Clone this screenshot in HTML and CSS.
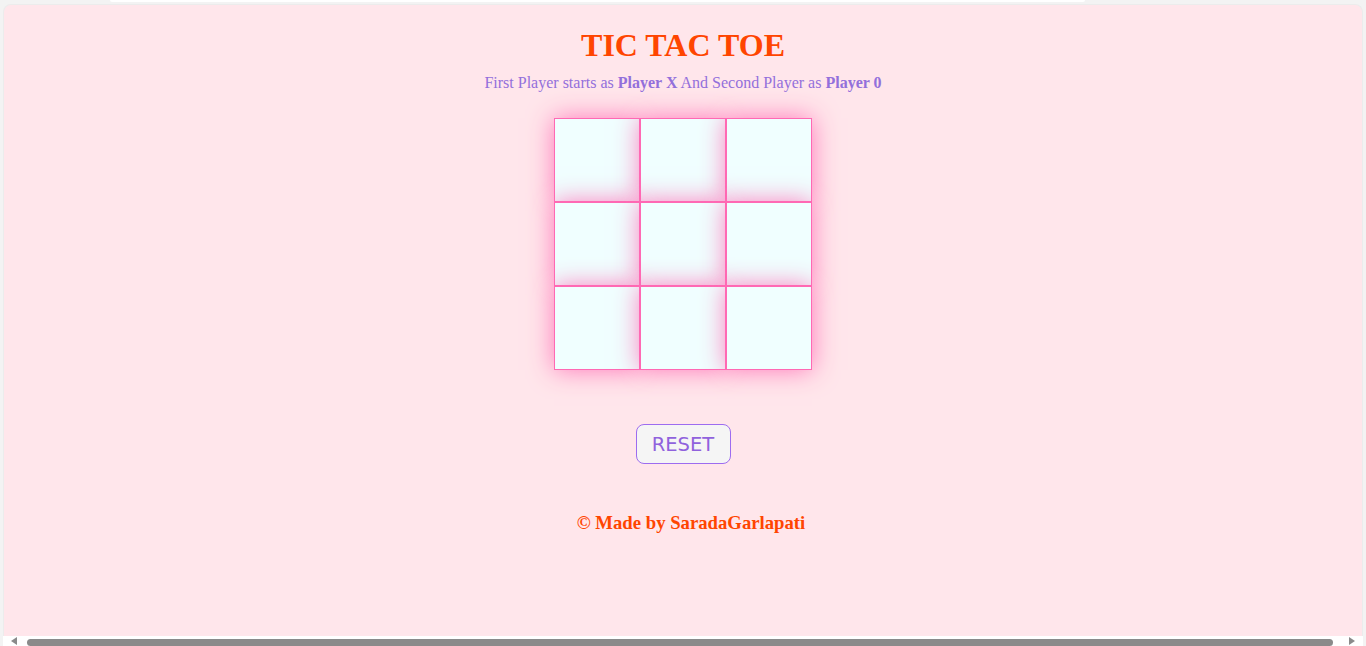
FILE: index.html
```html
<!DOCTYPE html>
<html>
<head>
<meta charset="utf-8">
<title>Tic Tac Toe</title>
<link rel="stylesheet" href="styles.css">
</head>
<body>
<div class="topstrip"></div>
<main class="card">
  <h1 class="title">TIC TAC TOE</h1>
  <p class="subtitle">First Player starts as <b>Player X</b> And Second Player as <b>Player 0</b></p>
  <div class="board">
    <div class="cell"></div><div class="cell"></div><div class="cell"></div>
    <div class="cell"></div><div class="cell"></div><div class="cell"></div>
    <div class="cell"></div><div class="cell"></div><div class="cell"></div>
  </div>
  <button class="reset">RESET</button>
  <p class="footer">© Made by SaradaGarlapati</p>
</main>
<div class="hscroll">
  <span class="arrow left"></span>
  <span class="thumb"></span>
  <span class="arrow right"></span>
</div>
</body>
</html>
```
FILE: styles.css
```css
html, body {
  margin: 0;
  padding: 0;
  height: 646px;
  overflow: hidden;
  background: #f3f3f3;
}
body {
  font-family: "Liberation Serif", "Times New Roman", serif;
}
.topstrip {
  margin-left: 110px;
  width: 975px;
  height: 2px;
  background: #ffffff;
  border-radius: 0 0 3px 3px;
}
.card {
  box-sizing: border-box;
  margin: 2px 3px 0 3px;
  height: 632px;
  background: #ffe6eb;
  border: 1px solid #ececec;
  border-bottom: none;
  border-radius: 8px 8px 0 0;
  display: flex;
  flex-direction: column;
  align-items: center;
}
.title {
  margin: 21px 0 0 0;
  font-size: 32px;
  line-height: 38px;
  font-weight: bold;
  color: #ff4500;
}
.subtitle {
  margin: 10px 0 0 0;
  font-size: 16px;
  line-height: 18px;
  color: #9370db;
}
.board {
  margin-top: 26px;
  display: grid;
  grid-template-columns: repeat(3, 86px);
  grid-auto-rows: 84px;
}
.cell {
  box-sizing: border-box;
  background: #f0ffff;
  border: 1px solid #ff69b4;
  box-shadow: 0 0 24px rgba(255, 105, 180, 0.9);
}
.reset {
  margin-top: 54px;
  width: 95px;
  height: 40px;
  padding: 0;
  background: #f5f5f5;
  border: 1px solid #9d6cf0;
  border-radius: 8px;
  color: #9062dd;
  font-family: "DejaVu Sans", Verdana, sans-serif;
  font-size: 19.5px;
}
.footer {
  margin: 48px 0 0 0;
  padding-left: 16px;
  font-size: 18.72px;
  line-height: 22px;
  font-weight: bold;
  color: #ff4500;
}
.hscroll {
  height: 10px;
  margin: 0 3px;
  background: #ffffff;
  display: flex;
  align-items: center;
}
.arrow {
  width: 0;
  height: 0;
  border-top: 4px solid transparent;
  border-bottom: 4px solid transparent;
}
.arrow.left {
  margin-left: 8px;
  border-right: 6px solid #8a8a8a;
}
.arrow.right {
  margin-right: 8px;
  border-left: 6px solid #8a8a8a;
}
.thumb {
  flex: 1;
  height: 7px;
  margin: 3px 16px 0 10px;
  align-self: flex-start;
  background: #8a8a8a;
  border-radius: 4px;
}
```
